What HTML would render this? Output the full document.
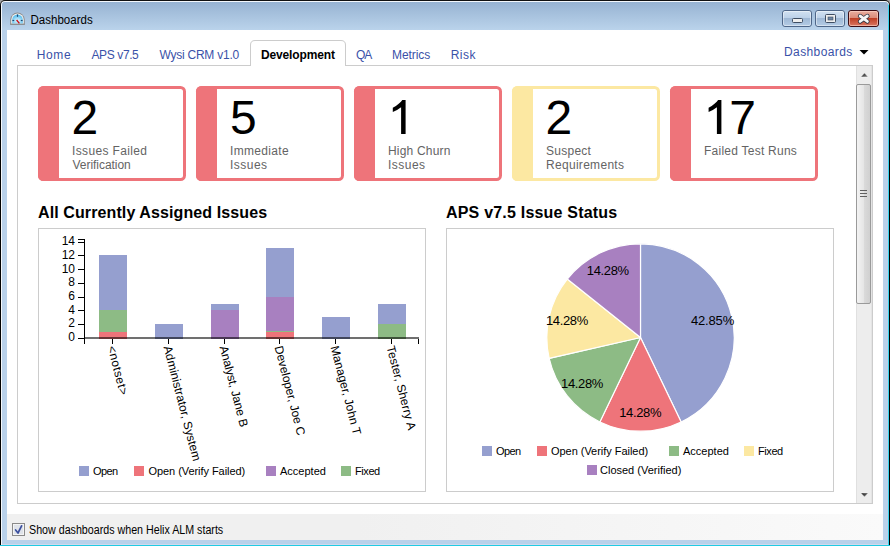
<!DOCTYPE html>
<html><head><meta charset="utf-8">
<style>
html,body{margin:0;padding:0;width:890px;height:546px;overflow:hidden;background:#b9d1ea;}
svg{position:absolute;left:0;top:0;display:block;}
text{font-family:"Liberation Sans",sans-serif;}
</style></head>
<body>
<svg width="890" height="546" viewBox="0 0 890 546">
<defs>
<linearGradient id="tb" gradientUnits="userSpaceOnUse" x1="0" y1="2" x2="0" y2="30">
<stop offset="0" stop-color="#97b3d2"/><stop offset="1" stop-color="#bad3eb"/>
</linearGradient>
<linearGradient id="btn" x1="0" y1="0" x2="0" y2="1">
<stop offset="0" stop-color="#d3e2f2"/><stop offset="0.45" stop-color="#bdd2e9"/><stop offset="0.5" stop-color="#9fb8d5"/><stop offset="1" stop-color="#b5cde6"/>
</linearGradient>
<linearGradient id="cbtn" x1="0" y1="0" x2="0" y2="1">
<stop offset="0" stop-color="#eab0a2"/><stop offset="0.45" stop-color="#dc8c7a"/><stop offset="0.5" stop-color="#bf4026"/><stop offset="1" stop-color="#dc7a66"/>
</linearGradient>
<linearGradient id="thumb" x1="0" y1="0" x2="1" y2="0">
<stop offset="0" stop-color="#f4f4f4"/><stop offset="0.5" stop-color="#e6e6e6"/><stop offset="0.55" stop-color="#dadada"/><stop offset="1" stop-color="#cfcfcf"/>
</linearGradient>
<radialGradient id="gface" cx="0.5" cy="0.7" r="0.6">
<stop offset="0" stop-color="#e8f7ff"/><stop offset="1" stop-color="#5cc0ee"/>
</radialGradient>
<linearGradient id="sbg" x1="0" y1="0" x2="1" y2="0"><stop offset="0" stop-color="#f0f0f0"/><stop offset="0.4" stop-color="#f0f0f0"/><stop offset="1" stop-color="#fafafa"/></linearGradient>
<linearGradient id="tb2" gradientUnits="userSpaceOnUse" x1="0" y1="2" x2="0" y2="30"><stop offset="0" stop-color="#97b3d2"/><stop offset="1" stop-color="#bad3eb"/></linearGradient>
<linearGradient id="arr" x1="0" y1="0" x2="1" y2="1"><stop offset="0" stop-color="#111"/><stop offset="1" stop-color="#8c8c8c"/></linearGradient>
</defs>

<!-- window frame -->
<rect x="0" y="0" width="890" height="546" fill="#a4a4a4"/>
<rect x="0" y="0" width="890" height="560" rx="5" fill="#111"/>
<rect x="1" y="1" width="888" height="560" rx="4" fill="#f4f8fc"/>
<rect x="2" y="2" width="886" height="560" rx="3" fill="#b9d1ea"/>
<rect x="2" y="2" width="886" height="28" rx="3" fill="url(#tb)"/>
<rect x="2" y="6" width="886" height="24" fill="url(#tb2)"/>
<rect x="0" y="6" width="1" height="540" fill="#000"/>
<rect x="889" y="6" width="1" height="540" fill="#000"/>
<path d="M888.5,4.5 L888.5,546" stroke="#3ad4ee" stroke-width="1"/>
<rect x="0" y="545" width="890" height="1" fill="#20cbe3"/>
<rect x="2" y="544" width="886" height="1" fill="#d2d8ec"/>
<!-- title -->
<g>
<path d="M10.2,24.6 L10.2,19.8 A7.3,7.3 0 0 1 24.8,19.8 L24.8,24.6 Z" fill="#8e8e8e"/>
<path d="M11.2,23.8 L11.2,19.8 A6.3,6.3 0 0 1 23.8,19.8 L23.8,23.8 Z" fill="#f2f2f2"/>
<path d="M12.2,23.4 L12.2,19.8 A5.3,5.3 0 0 1 22.8,19.8 L22.8,23.4 Z" fill="url(#gface)"/>
<rect x="10.2" y="23.8" width="14.6" height="1" fill="#888"/>
<line x1="17.5" y1="14.4" x2="17.5" y2="16.8" stroke="#1d4a74" stroke-width="1.2"/>
<line x1="12.4" y1="20.5" x2="14.2" y2="20.5" stroke="#1d4a74" stroke-width="1.2"/>
<line x1="20.8" y1="20.5" x2="22.6" y2="20.5" stroke="#1d4a74" stroke-width="1.2"/>
<line x1="16.6" y1="20" x2="19.4" y2="23.4" stroke="#c8101a" stroke-width="1.4"/>
</g>
<text x="30.5" y="24" font-size="12" fill="#000" textLength="62.2" lengthAdjust="spacingAndGlyphs">Dashboards</text>

<!-- caption buttons -->
<rect x="782.5" y="10.5" width="29" height="16" rx="2.5" fill="url(#btn)" stroke="#4e6688" stroke-width="1"/>
<rect x="783.5" y="11.5" width="27" height="14" rx="1.5" fill="none" stroke="#ffffff" stroke-opacity="0.45" stroke-width="1"/>
<rect x="792.5" y="18.5" width="10" height="4" rx="1" fill="#eeeeee" stroke="#3e4d62" stroke-width="1"/>
<rect x="815.5" y="10.5" width="29" height="16" rx="2.5" fill="url(#btn)" stroke="#4e6688" stroke-width="1"/>
<rect x="816.5" y="11.5" width="27" height="14" rx="1.5" fill="none" stroke="#ffffff" stroke-opacity="0.45" stroke-width="1"/>
<rect x="825.5" y="14.5" width="10" height="8" rx="1" fill="#eeeeee" stroke="#3e4d62" stroke-width="1"/>
<rect x="828" y="17" width="5" height="3" fill="#6d85a3" stroke="#3e4d62" stroke-width="0.6"/>
<rect x="848.5" y="10.5" width="30" height="16" rx="2.5" fill="url(#cbtn)" stroke="#3a0c14" stroke-width="1"/>
<rect x="849.5" y="11.5" width="28" height="14" rx="1.5" fill="none" stroke="#ffd8cc" stroke-opacity="0.6" stroke-width="1"/>
<path d="M860.1,16 L867.4,21.4 M867.4,16 L860.1,21.4" stroke="#2c3442" stroke-width="4.4" stroke-linecap="round"/>
<path d="M860.1,16 L867.4,21.4 M867.4,16 L860.1,21.4" stroke="#f6f6f6" stroke-width="2.8" stroke-linecap="round"/>

<!-- client -->
<rect x="7" y="30" width="876" height="484" fill="#ffffff"/>
<rect x="7" y="514" width="876" height="26" fill="url(#sbg)"/>

<!-- tabs -->
<rect x="17.5" y="65.5" width="855" height="438" fill="#fff" stroke="#cccccc" stroke-width="1"/>
<path d="M250.5,66 L250.5,45 Q250.5,40.5 255,40.5 L341,40.5 Q345.5,40.5 345.5,45 L345.5,66" fill="#fff" stroke="#cccccc" stroke-width="1"/>
<rect x="251" y="65" width="94" height="2" fill="#fff"/>
<g font-size="12" fill="#3a51a8">
<text x="36.8" y="59" textLength="33.8">Home</text>
<text x="91.5" y="59" textLength="47.3">APS v7.5</text>
<text x="159.5" y="59" textLength="79.7">Wysi CRM v1.0</text>
<text x="356" y="59" textLength="16.3">QA</text>
<text x="392" y="59" textLength="38.3">Metrics</text>
<text x="450.7" y="59" textLength="24.8">Risk</text>
<text x="784" y="55.5" textLength="68.3">Dashboards</text>
</g>
<text x="261" y="59" font-size="12" font-weight="bold" fill="#000" textLength="73.9">Development</text>
<path d="M859.5,50 L868.5,50 L864,54.5 Z" fill="#000"/>

<!-- scrollbar -->
<rect x="856" y="66" width="16" height="437" fill="#ededed"/>
<rect x="856" y="66" width="1" height="437" fill="#e0e0e0"/><rect x="871" y="66" width="1" height="437" fill="#e4e4e4"/>
<path d="M860.8,77 L864.5,73 L868.2,77 Z" fill="url(#arr)" stroke="#ffffff" stroke-opacity="0.7" stroke-width="0.6"/>
<rect x="856.5" y="84.5" width="14" height="219" rx="1.5" fill="url(#thumb)" stroke="#9a9a9a" stroke-width="1"/>
<g fill="#606060"><rect x="860" y="190" width="7" height="1"/><rect x="860" y="193" width="7" height="1"/><rect x="860" y="196" width="7" height="1"/></g>
<path d="M860.8,493 L868.2,493 L864.5,497 Z" fill="url(#arr)" stroke="#ffffff" stroke-opacity="0.7" stroke-width="0.6"/>

<!-- cards -->
<g id="cards">
<g transform="translate(38,86)">
<rect x="1.5" y="1.5" width="145" height="92" rx="4" fill="#fff" stroke="#ee747a" stroke-width="3"/>
<rect x="0" y="0" width="21" height="95" rx="5.5" fill="#ee747a"/>
<rect x="10" y="0" width="11" height="95" fill="#ee747a"/>
</g>
<g transform="translate(196,86)">
<rect x="1.5" y="1.5" width="145" height="92" rx="4" fill="#fff" stroke="#ee747a" stroke-width="3"/>
<rect x="0" y="0" width="21" height="95" rx="5.5" fill="#ee747a"/>
<rect x="10" y="0" width="11" height="95" fill="#ee747a"/>
</g>
<g transform="translate(354,86)">
<rect x="1.5" y="1.5" width="145" height="92" rx="4" fill="#fff" stroke="#ee747a" stroke-width="3"/>
<rect x="0" y="0" width="21" height="95" rx="5.5" fill="#ee747a"/>
<rect x="10" y="0" width="11" height="95" fill="#ee747a"/>
</g>
<g transform="translate(512,86)">
<rect x="1.5" y="1.5" width="145" height="92" rx="4" fill="#fff" stroke="#fce8a2" stroke-width="3"/>
<rect x="0" y="0" width="21" height="95" rx="5.5" fill="#fce8a2"/>
<rect x="10" y="0" width="11" height="95" fill="#fce8a2"/>
</g>
<g transform="translate(670,86)">
<rect x="1.5" y="1.5" width="145" height="92" rx="4" fill="#fff" stroke="#ee747a" stroke-width="3"/>
<rect x="0" y="0" width="21" height="95" rx="5.5" fill="#ee747a"/>
<rect x="10" y="0" width="11" height="95" fill="#ee747a"/>
</g>
</g>
<g font-size="48" fill="#000">
<text x="71.5" y="134">2</text>
<text x="230" y="134">5</text>

<text x="545.4" y="134">2</text>
<text x="729.2" y="134">7</text>
</g>
<g font-size="12" fill="#646464">
<text x="72" y="155" textLength="75">Issues Failed</text><text x="72.5" y="169" textLength="58.3">Verification</text>
<text x="230" y="155" textLength="58.6">Immediate</text><text x="230" y="169" textLength="37.1">Issues</text>
<text x="388" y="155" textLength="62.4">High Churn</text><text x="388" y="169" textLength="37.1">Issues</text>
<text x="546" y="155" textLength="44.9">Suspect</text><text x="546" y="169" textLength="78">Requirements</text>
<text x="704" y="155" textLength="92.8">Failed Test Runs</text>
</g>

<path d="M405.6,100 L405.6,134 L401.1,134 L401.1,107.3 Q397.5,110.2 392.8,112 L392.8,107.8 Q396.5,106 399,103.6 Q401.2,101.6 402.3,100 Z" fill="#000"/>
<path transform="translate(315.8,0)" d="M405.6,100 L405.6,134 L401.1,134 L401.1,107.3 Q397.5,110.2 392.8,112 L392.8,107.8 Q396.5,106 399,103.6 Q401.2,101.6 402.3,100 Z" fill="#000"/>
<!-- chart titles -->
<g font-size="16" font-weight="bold" fill="#000">
<text x="38" y="218" textLength="229.1">All Currently Assigned Issues</text>
<text x="446" y="218" textLength="171.2">APS v7.5 Issue Status</text>
</g>

<!-- chart boxes -->
<rect x="38.5" y="228.5" width="387" height="263" fill="#fff" stroke="#cccccc" stroke-width="1"/>
<rect x="446.5" y="228.5" width="387" height="263" fill="#fff" stroke="#cccccc" stroke-width="1"/>

<!-- bar chart -->
<g id="bars">
<!-- bar1 -->
<rect x="99" y="255" width="28" height="55" fill="#959fcf"/>
<rect x="99" y="310" width="28" height="22" fill="#8dbb85"/>
<rect x="99" y="332" width="28" height="7" fill="#ee747a"/>
<!-- bar2 -->
<rect x="155" y="324" width="28" height="15" fill="#959fcf"/>
<!-- bar3 -->
<rect x="211" y="304" width="28" height="6" fill="#959fcf"/>
<rect x="211" y="310" width="28" height="29" fill="#a880c0"/>
<!-- bar4 -->
<rect x="266" y="248" width="28" height="49" fill="#959fcf"/>
<rect x="266" y="297" width="28" height="34" fill="#a880c0"/>
<rect x="266" y="331" width="28" height="1" fill="#8dbb85"/>
<rect x="266" y="332" width="28" height="7" fill="#ee747a"/>
<!-- bar5 -->
<rect x="322" y="317" width="28" height="22" fill="#959fcf"/>
<!-- bar6 -->
<rect x="378" y="304" width="28" height="20" fill="#959fcf"/>
<rect x="378" y="324" width="28" height="15" fill="#8dbb85"/>
</g>
<rect x="85" y="337" width="334" height="2" fill="rgba(0,0,0,0.56)"/>
<g fill="#000">
<rect x="84" y="239" width="1" height="105"/>
<rect x="78" y="239" width="6" height="1"/>
<rect x="78" y="242" width="6" height="1"/>
<rect x="78" y="255" width="6" height="1"/>
<rect x="78" y="269" width="6" height="1"/>
<rect x="78" y="283" width="6" height="1"/>
<rect x="78" y="297" width="6" height="1"/>
<rect x="78" y="310" width="6" height="1"/>
<rect x="78" y="324" width="6" height="1"/>
<rect x="78" y="338" width="6" height="1"/>
<rect x="112" y="339" width="1" height="5"/>
<rect x="168" y="339" width="1" height="5"/>
<rect x="224" y="339" width="1" height="5"/>
<rect x="279" y="339" width="1" height="5"/>
<rect x="335" y="339" width="1" height="5"/>
<rect x="391" y="339" width="1" height="5"/>
<rect x="418" y="339" width="1" height="5"/>
</g>
<g font-size="12" fill="#000" text-anchor="end">
<text x="75" y="245">14</text>
<text x="75" y="259">12</text>
<text x="75" y="273">10</text>
<text x="75" y="286">8</text>
<text x="75" y="300">6</text>
<text x="75" y="314">4</text>
<text x="75" y="327">2</text>
<text x="75" y="341">0</text>
</g>
<g font-size="12" fill="#000">
<text transform="translate(107.5,347) rotate(75.5)" textLength="50.5">&lt;notset&gt;</text>
<text transform="translate(163.5,347) rotate(75.5)" textLength="118.5">Administrator, System</text>
<text transform="translate(219.5,347) rotate(75.5)" textLength="83.4">Analyst, Jane B</text>
<text transform="translate(274.5,347) rotate(75.5)" textLength="92">Developer, Joe C</text>
<text transform="translate(330.5,347) rotate(75.5)" textLength="91.5">Manager, John T</text>
<text transform="translate(386.5,347) rotate(75.5)" textLength="86.5">Tester, Sherry A</text>
</g>
<!-- bar legend -->
<rect x="79" y="466" width="10" height="10" fill="#959fcf"/>
<rect x="134" y="466" width="10" height="10" fill="#ee747a"/>
<rect x="266" y="466" width="10" height="10" fill="#a880c0"/>
<rect x="341" y="466" width="10" height="10" fill="#8dbb85"/>
<g font-size="11" fill="#000">
<text x="93" y="475" textLength="25.2">Open</text>
<text x="148.5" y="475" textLength="96.7">Open (Verify Failed)</text>
<text x="280" y="475">Accepted</text>
<text x="355" y="475" textLength="25.2">Fixed</text>
</g>

<!-- pie -->
<g stroke="#fff" stroke-width="1.2" stroke-linejoin="round">
<path d="M640.5,337.5 L640.50,243.80 A93.7,93.7 0 0 1 681.15,421.92 Z" fill="#959fcf"/>
<path d="M640.5,337.5 L681.15,421.92 A93.7,93.7 0 0 1 599.85,421.92 Z" fill="#ee747a"/>
<path d="M640.5,337.5 L599.85,421.92 A93.7,93.7 0 0 1 549.15,358.35 Z" fill="#8dbb85"/>
<path d="M640.5,337.5 L549.15,358.35 A93.7,93.7 0 0 1 567.24,279.08 Z" fill="#fce8a2"/>
<path d="M640.5,337.5 L567.24,279.08 A93.7,93.7 0 0 1 640.50,243.80 Z" fill="#a880c0"/>
</g>
<g font-size="13" fill="#000" text-anchor="middle">
<text x="712.6" y="325" textLength="43.2">42.85%</text>
<text x="640.4" y="417" textLength="42.3">14.28%</text>
<text x="582.2" y="388" textLength="42.3">14.28%</text>
<text x="567.1" y="325" textLength="42.3">14.28%</text>
<text x="608" y="275" textLength="42.3">14.28%</text>
</g>
<rect x="482" y="446" width="10" height="10" fill="#959fcf"/>
<rect x="537" y="446" width="10" height="10" fill="#ee747a"/>
<rect x="669" y="446" width="10" height="10" fill="#8dbb85"/>
<rect x="744" y="446" width="10" height="10" fill="#fce8a2"/>
<rect x="587" y="465" width="10" height="10" fill="#a880c0"/>
<g font-size="11" fill="#000">
<text x="496" y="455" textLength="25.2">Open</text>
<text x="551" y="455" textLength="97.2">Open (Verify Failed)</text>
<text x="683" y="455">Accepted</text>
<text x="758" y="455" textLength="25.2">Fixed</text>
<text x="600" y="474">Closed (Verified)</text>
</g>

<!-- status bar -->
<rect x="12.5" y="523.5" width="12" height="12" fill="#f4f4f4" stroke="#8a8a8a" stroke-width="1"/>
<rect x="14" y="525" width="9" height="9" fill="#dfe3ea"/>
<path d="M15.6,530 L18,533 L21.6,525.8" fill="none" stroke="#3b4f9e" stroke-width="1.7" stroke-linecap="round" stroke-linejoin="round"/>
<text x="29" y="534" font-size="12" fill="#000" textLength="194.2" lengthAdjust="spacingAndGlyphs">Show dashboards when Helix ALM starts</text>
</svg>
</body></html>
